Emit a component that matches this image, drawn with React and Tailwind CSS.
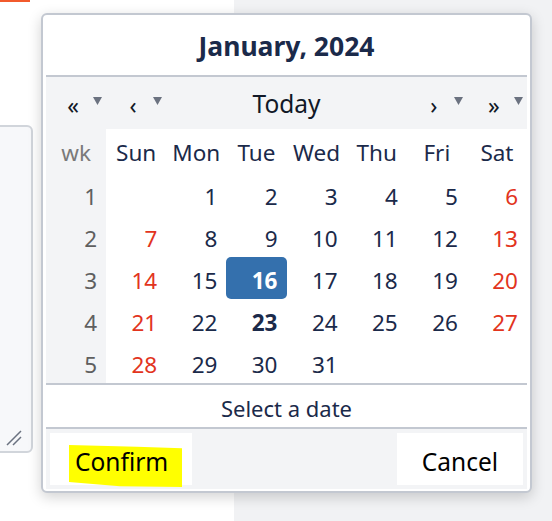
const weeks = [
  [1, [null, 1, 2, 3, 4, 5, 6]],
  [2, [7, 8, 9, 10, 11, 12, 13]],
  [3, [14, 15, 16, 17, 18, 19, 20]],
  [4, [21, 22, 23, 24, 25, 26, 27]],
  [5, [28, 29, 30, 31, null, null, null]],
];

const dayNames = ['Sun', 'Mon', 'Tue', 'Wed', 'Thu', 'Fri', 'Sat'];

const Caret = () => (
  <svg width="9" height="8" viewBox="0 0 9 8" className="absolute right-[4px] top-[20px]">
    <path d="M0 0 H9 L4.5 8 Z" fill="#6b7280" />
  </svg>
);

const NavButton = ({ label }) => (
  <div className="relative flex h-full items-center justify-center pr-[6px] pt-[4px] text-[23px] text-[#111827]">
    <span className="leading-none">{label}</span>
    <Caret />
  </div>
);

const dayClass = (day, col) => {
  if (day === 16) return 'bg-[#3470ad] text-white font-bold rounded-[5px]';
  if (day === 23) return 'font-bold text-[#1b2a4a]';
  if (col === 0 || col === 6) return 'text-[#e2341d]';
  return 'text-[#1b2a4a]';
};

const App = () => {
  return (
    <div className="relative flex h-[521px] w-[552px] overflow-hidden bg-[#f1f2f4] font-['Noto_Sans',sans-serif]">
      <div className="flex w-[234px] flex-col bg-white">
        <div className="h-[2px] w-[30px] bg-[#f25a2c]" />
        <div className="relative mt-[123px] ml-[-10px] h-[328px] w-[43px] rounded-r-[6px] border-2 border-[#d1d5db] bg-[#f7f8fa]">
          <svg width="18" height="18" viewBox="0 0 18 18" className="absolute bottom-[4px] right-[8px]">
            <path d="M2 16 L16 2 M8 16 L16 8" stroke="#6b7280" strokeWidth="1.5" />
          </svg>
        </div>
      </div>

      <div className="absolute left-[41px] top-[13px] flex w-[491px] flex-col rounded-[6px] border-2 border-[#c3c8d1] bg-white px-[3px] pb-[2px] shadow-[0_4px_14px_rgba(0,0,0,0.18)]">
        <div className="flex h-[62px] items-center justify-center border-b-2 border-[#c3c8d1] pt-[4px] text-[26.5px] font-bold text-[#1b2a4a]">
          January, 2024
        </div>

        <div className="grid h-[52px] grid-cols-8 bg-[#f3f4f6]">
          <NavButton label="«" />
          <NavButton label="‹" />
          <div className="col-span-4 flex items-center justify-center pt-[3px] text-[24.5px] text-[#111827]">
            Today
          </div>
          <NavButton label="›" />
          <NavButton label="»" />
        </div>

        <div className="grid grid-cols-8 border-b-2 border-[#c3c8d1] text-[22.5px]">
          <div className="flex h-[44px] items-center justify-center bg-[#f3f4f6] pt-[4px] text-[#7a7a7a]">wk</div>
          {dayNames.map((name) => (
            <div key={name} className="flex h-[44px] items-center justify-center pt-[4px] text-[#1b2a4a]">
              {name}
            </div>
          ))}
          {weeks.map(([wk, days]) => (
            <div key={wk} className="contents">
              <div className="flex h-[42px] items-center justify-end bg-[#f3f4f6] pr-[9px] pt-[6px] text-[#5f5f5f]">
                {wk}
              </div>
              {days.map((day, col) => (
                <div
                  key={col}
                  className={`flex h-[42px] items-center justify-end pr-[9px] pt-[6px] ${day ? dayClass(day, col) : ''}`}
                >
                  {day}
                </div>
              ))}
            </div>
          ))}
        </div>

        <div className="flex h-[44px] items-center justify-center border-b-2 border-[#c3c8d1] pt-[4px] text-[22px] text-[#1b2a4a]">
          Select a date
        </div>

        <div className="flex h-[60px] items-center justify-between bg-[#f3f4f6] px-[4px]">
          <button className="relative flex h-[52px] w-[142px] items-center bg-white pl-[25px] pt-[6px] text-[24.5px] text-black">
            <span className="absolute left-[19px] top-[12px] h-[42px] w-[113px] bg-[#ffff00] [clip-path:polygon(0_0,60%_4%,100%_8%,100%_100%,45%_98%,0_88%)]" />
            <span className="relative">Confirm</span>
          </button>
          <button className="flex h-[52px] w-[126px] items-center justify-center bg-white pt-[6px] text-[24.5px] text-black">
            Cancel
          </button>
        </div>
      </div>
    </div>
  );
};

export default App;
